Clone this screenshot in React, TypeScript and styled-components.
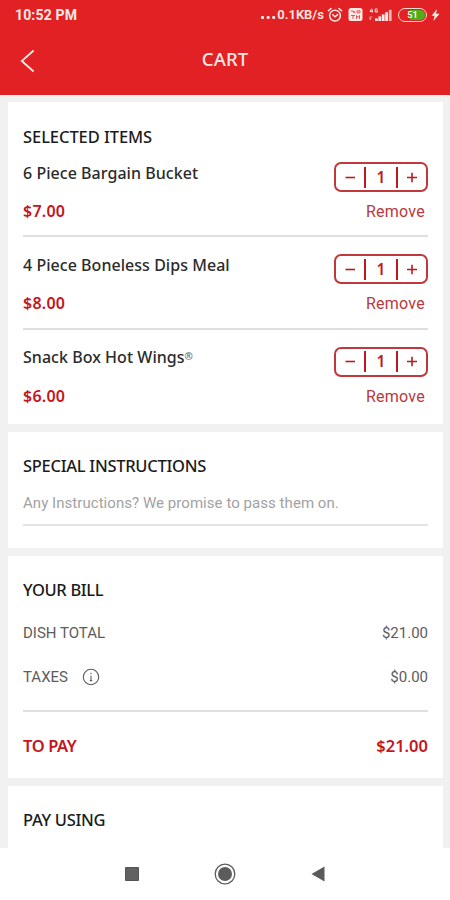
import React from "react";
import styled, { createGlobalStyle } from "styled-components";

const GlobalStyle = createGlobalStyle`
  * { box-sizing: border-box; }
  body { margin: 0; background: #fff; }
`;

const humanist = `"Noto Sans", "Open Sans", sans-serif`;
const crimson = "#bd1a20";

const Screen = styled.div`
  width: 450px;
  height: 900px;
  overflow: hidden;
  display: flex;
  flex-direction: column;
  background: #f1f1f1;
  font-family: Roboto, sans-serif;
`;

const Header = styled.header`
  flex: none;
  height: 95px;
  background: #e22124;
  color: #ffe9e6;
`;

const StatusBar = styled.div`
  height: 29px;
  padding: 0 10px 0 15px;
  display: flex;
  align-items: center;
  justify-content: space-between;
  font-weight: 700;
`;

const Clock = styled.span`
  font-size: 14px;
  letter-spacing: 0.15px;
`;

const StatusIcons = styled.div`
  display: flex;
  align-items: center;
  gap: 5px;
`;

const Speed = styled.span`
  display: flex;
  align-items: baseline;
  gap: 1px;
  font-size: 13px;
  font-weight: 600;
  margin-right: -2px;
`;

const TitleBar = styled.div`
  height: 62px;
  padding: 0 20px;
  display: grid;
  grid-template-columns: 40px 1fr 40px;
  align-items: center;
`;

const BackButton = styled.button`
  border: 0;
  padding: 2px 0 0;
  background: none;
  color: inherit;
  height: 26px;
  text-align: left;
`;

const PageTitle = styled.h1`
  margin: 0;
  padding-bottom: 2px;
  text-align: center;
  font: 500 18.5px/26px ${humanist};
  letter-spacing: 0.1px;
`;

const Content = styled.main`
  flex: 1;
  min-height: 0;
  overflow: hidden;
  padding: 7px 7px 0 8px;
  display: flex;
  flex-direction: column;
  gap: 8px;
`;

const Card = styled.section<{ $height: number; $top?: number }>`
  flex: none;
  height: ${(p) => p.$height}px;
  padding: ${(p) => p.$top ?? 22}px 15px 0;
  background: #fff;
`;

const Heading = styled.h2<{ $track?: number }>`
  margin: 0;
  font: 500 16.5px/24px ${humanist};
  letter-spacing: ${(p) => p.$track ?? 0}px;
  color: #1b1b1b;
  white-space: nowrap;
`;

const Items = styled.ul`
  list-style: none;
  margin: -4px 0 0;
  padding: 0;
`;

const Item = styled.li`
  height: 92.4px;
  padding-top: 15.5px;
  display: flex;
  justify-content: space-between;
  border-bottom: 2px solid #dfdfdf;
  &:last-child { border-bottom: 0; }
`;

const ItemInfo = styled.div`
  display: flex;
  flex-direction: column;
  gap: 14.6px;
`;

const ItemName = styled.span`
  font: 500 16px/24px ${humanist};
  letter-spacing: 0.04px;
  color: #2b2b2b;
  white-space: nowrap;
`;

const Registered = styled.span`
  font-size: 10px;
  position: relative;
  top: -3px;
  line-height: 1;
  color: #666;
`;

const Price = styled.span`
  font: 600 16px/24px ${humanist};
  letter-spacing: 0.25px;
  color: #c4161c;
`;

const ItemActions = styled.div`
  display: flex;
  flex-direction: column;
  align-items: flex-end;
  gap: 9px;
  padding-top: 1.5px;
`;

const Stepper = styled.div`
  width: 94px;
  height: 30px;
  border: 2px solid #c0383c;
  border-radius: 7px;
  display: grid;
  grid-template-columns: 29px 32px 29px;
  align-items: center;
`;

const StepButton = styled.button`
  border: 0;
  padding: 0;
  background: none;
  color: ${crimson};
  height: 20px;
  display: flex;
  align-items: center;
  justify-content: center;
`;

const Quantity = styled.span`
  height: 21px;
  border: solid ${crimson};
  border-width: 0 2px;
  margin: 0 -1px;
  text-align: center;
  font: 600 15.5px/21px ${humanist};
  color: ${crimson};
`;

const Remove = styled.button`
  border: 0;
  padding: 0 3px 0 0;
  background: none;
  color: #b9393d;
  font: 400 16px/22px Roboto, sans-serif;
  letter-spacing: 0.25px;
`;

const Instructions = styled.div`
  height: 48px;
  padding-top: 14px;
  border-bottom: 2px solid #e3e3e3;
  color: #a2a2a2;
  font-size: 15px;
  line-height: 22px;
  letter-spacing: 0.05px;
  white-space: nowrap;
`;

const BillLines = styled.div`
  padding-top: 9px;
`;

const BillRow = styled.div`
  height: 44px;
  display: flex;
  align-items: center;
  justify-content: space-between;
  font-size: 15px;
  color: #5c5c5c;
`;

const BillLabel = styled.span`
  display: flex;
  align-items: center;
  gap: 14px;
`;

const Rule = styled.hr`
  margin: 11px 0 0;
  border: 0;
  height: 2px;
  background: #e0e0e0;
`;

const TotalRow = styled.div`
  display: flex;
  justify-content: space-between;
  margin-top: 22px;
  font: 600 16.5px/24px ${humanist};
  color: #c4161c;
`;

const TotalLabel = styled.span`
  letter-spacing: -0.4px;
`;

const NavBar = styled.nav`
  flex: none;
  height: 52px;
  background: #fff;
  display: flex;
  justify-content: center;
  align-items: center;
  gap: 75px;
`;

const DotsIcon = () => (
  <svg width="15" height="4" viewBox="0 0 15 4" fill="currentColor">
    <rect x="0" y="1" width="3" height="3" rx="1" />
    <rect x="5.6" y="1" width="3" height="3" rx="1" />
    <rect x="11.2" y="1" width="3" height="3" rx="1" />
  </svg>
);

const AlarmIcon = () => (
  <svg width="16" height="16" viewBox="0 0 16 16" fill="none" stroke="currentColor" strokeWidth="1.5" strokeLinecap="round">
    <circle cx="8" cy="8.6" r="5.4" />
    <path d="M1.4 3.8 4 1.6M14.6 3.8 12 1.6M5.8 7.8l2.2 2 2.6-2.2" />
  </svg>
);

const VolteIcon = () => (
  <svg width="15" height="15" viewBox="0 0 15 15">
    <rect x="0.5" y="1" width="14" height="13" rx="2.5" fill="currentColor" />
    <path d="M3 4h2l1 2 1-2M9 3.8h3v2H9zM3 8.5h4M5 8.5v3.5M8.5 12V8.5l1.5 2 1.5-2V12" fill="none" stroke="#e2474a" strokeWidth="0.9" />
  </svg>
);

const SignalIcon = () => (
  <svg width="25" height="16" viewBox="0 0 25 16" fill="currentColor">
    <path d="M3.8 1.6 2 4.4h3M4.2 2.6v3M9.5 2H7.2v3h2.3V3.8H8.4" fill="none" stroke="currentColor" strokeWidth="1" />
    <path d="M1.5 9.4h3v1.2H3V13H1.5z" opacity=".6" />
    <rect x="7" y="11.4" width="2.8" height="2.6" />
    <rect x="10.4" y="9.4" width="2.8" height="4.6" />
    <rect x="13.8" y="7.4" width="2.8" height="6.6" />
    <rect x="17.2" y="5.2" width="2.8" height="8.8" />
    <rect x="20.8" y="2.8" width="2.8" height="11.2" opacity=".75" />
  </svg>
);

const BatteryFrame = styled.div`
  width: 29px;
  height: 14px;
  margin-right: -1px;
  border: 1.5px solid #ffd9d0;
  border-radius: 7px;
  padding: 1px;
`;

const BatteryLevel = styled.div`
  height: 100%;
  border-radius: 5px;
  background: linear-gradient(90deg, #e22124 0 40%, #4fae1c 40%);
  color: #ffeedd;
  font: 700 9px/10px Roboto, sans-serif;
  text-align: center;
`;

const BoltIcon = () => (
  <svg width="9" height="12" viewBox="0 0 9 12" fill="currentColor">
    <path d="M6 0 0.6 6.8h3L2.4 12 8.6 4.8H5z" />
  </svg>
);

const InfoIcon = () => (
  <svg width="18" height="18" viewBox="0 0 18 18" fill="none" stroke="currentColor" strokeWidth="1.1">
    <circle cx="9" cy="9" r="7.7" />
    <path d="M9 7.8v5M9 4.8v1.4M7.8 12.6h2.4" />
  </svg>
);

const products = [
  { name: "6 Piece Bargain Bucket", price: "$7.00" },
  { name: "4 Piece Boneless Dips Meal", price: "$8.00" },
  { name: "Snack Box Hot Wings", price: "$6.00", registered: true },
];

export default function App() {
  return (
    <Screen>
      <GlobalStyle />
      <Header>
        <StatusBar>
          <Clock>10:52 PM</Clock>
          <StatusIcons>
            <Speed><DotsIcon />0.1KB/s</Speed>
            <AlarmIcon />
            <VolteIcon />
            <SignalIcon />
            <BatteryFrame><BatteryLevel>51</BatteryLevel></BatteryFrame>
            <BoltIcon />
          </StatusIcons>
        </StatusBar>
        <TitleBar>
          <BackButton aria-label="Back">
            <svg width="16" height="24" viewBox="0 0 16 24" fill="none" stroke="currentColor" strokeWidth="1.8">
              <path d="M13.6 1.5 1.8 12l11.8 10.5" />
            </svg>
          </BackButton>
          <PageTitle>CART</PageTitle>
        </TitleBar>
      </Header>

      <Content>
        <Card $height={322} $top={23}>
          <Heading $track={-0.07}>SELECTED ITEMS</Heading>
          <Items>
            {products.map((p) => (
              <Item key={p.name}>
                <ItemInfo>
                  <ItemName>
                    {p.name}
                    {p.registered && <Registered>®</Registered>}
                  </ItemName>
                  <Price>{p.price}</Price>
                </ItemInfo>
                <ItemActions>
                  <Stepper>
                    <StepButton aria-label="Decrease">
                      <svg width="11" height="11" viewBox="0 0 11 11" stroke="currentColor" strokeWidth="1.6"><path d="M0.5 5.5h9.5" /></svg>
                    </StepButton>
                    <Quantity>1</Quantity>
                    <StepButton aria-label="Increase">
                      <svg width="11" height="11" viewBox="0 0 11 11" stroke="currentColor" strokeWidth="1.6"><path d="M1 5.5h10M6 .8v9.4" /></svg>
                    </StepButton>
                  </Stepper>
                  <Remove>Remove</Remove>
                </ItemActions>
              </Item>
            ))}
          </Items>
        </Card>

        <Card $height={116}>
          <Heading $track={-0.28}>SPECIAL INSTRUCTIONS</Heading>
          <Instructions>Any Instructions? We promise to pass them on.</Instructions>
        </Card>

        <Card $height={222}>
          <Heading $track={-0.35}>YOUR BILL</Heading>
          <BillLines>
            <BillRow>
              <BillLabel>DISH TOTAL</BillLabel>
              <span>$21.00</span>
            </BillRow>
            <BillRow>
              <BillLabel>
                TAXES
                <InfoIcon />
              </BillLabel>
              <span>$0.00</span>
            </BillRow>
          </BillLines>
          <Rule />
          <TotalRow>
            <TotalLabel>TO PAY</TotalLabel>
            <span>$21.00</span>
          </TotalRow>
        </Card>

        <Card $height={70}>
          <Heading $track={-0.3}>PAY USING</Heading>
        </Card>
      </Content>

      <NavBar>
        <svg width="14" height="14" viewBox="0 0 14 14"><path d="M.5.5h13v13H.5z" fill="#626262" stroke="#555" /></svg>
        <svg width="22" height="22" viewBox="0 0 22 22">
          <circle cx="11" cy="11" r="9.8" fill="none" stroke="#5c5c5c" strokeWidth="1.3" />
          <circle cx="11" cy="11" r="7" fill="#5c5c5c" />
        </svg>
        <svg width="14" height="16" viewBox="0 0 14 16"><path d="M13.5.5v15L.5 8z" fill="#5a5a5a" /></svg>
      </NavBar>
    </Screen>
  );
}
